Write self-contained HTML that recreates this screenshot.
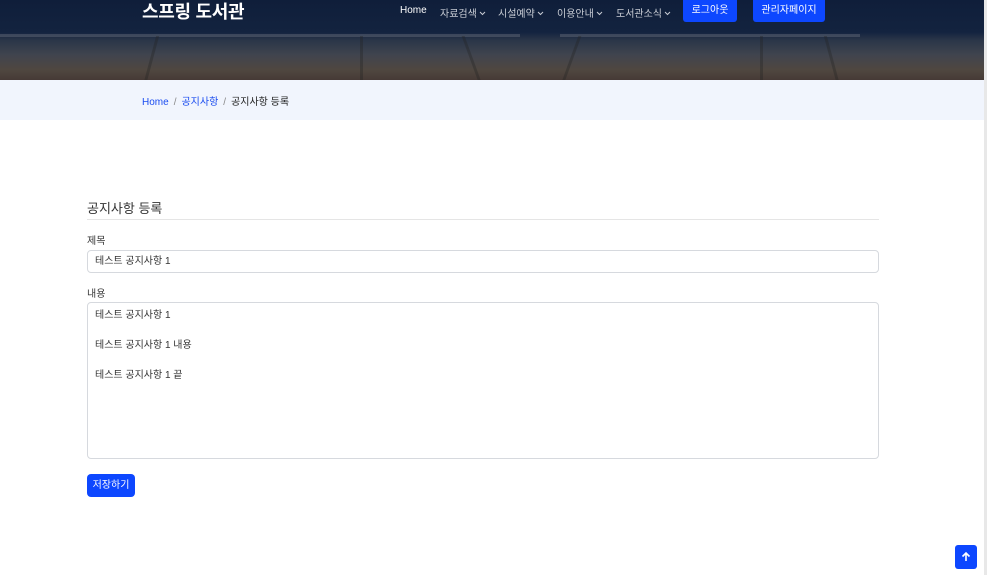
<!DOCTYPE html>
<html><head><meta charset="utf-8"><style>
*{box-sizing:border-box;margin:0;padding:0}
body{width:987px;height:575px;overflow:hidden;background:#fff;font-family:"Liberation Sans","Noto Sans CJK KR",sans-serif;position:relative}
.hero{position:absolute;left:0;top:0;width:984px;height:80px;background:linear-gradient(180deg,#0f1e3a 0px,#13233f 32px,#2a3548 40px,#40444e 55px,#4f4740 70px,#463a36 80px);overflow:hidden}
.hero .leg{position:absolute;top:36px;width:3px;height:46px;background:#222;opacity:.35}
.hero .bar{position:absolute;top:34px;height:3px;background:#8a8f99;opacity:.3}
.brand{position:absolute;left:142px;top:-2px;color:#fff;font-size:18px;font-weight:bold;letter-spacing:-0.3px}
.nav{position:absolute;top:5px;font-size:10px;color:#c8ccd4;white-space:nowrap}
.nav svg{width:7px;height:5px;margin-left:2px;vertical-align:1px}
.btn{position:absolute;top:0;height:22px;background:#0d47ff;color:#fff;font-size:10px;text-align:center;line-height:22px;border-radius:0 0 3px 3px}
.crumb{position:absolute;left:0;top:80px;width:984px;height:40px;background:#f1f5fd;font-size:10px;padding:13px 0 0 142px;color:#222}
.crumb a{color:#1a4cf0;text-decoration:none}
.crumb span{color:#888;margin:0 5px}
.scroll{position:absolute;right:0;top:0;width:3px;height:575px;background:#e8e8e8}
h5{position:absolute;left:87px;top:198px;font-size:13px;font-weight:normal;color:#333}
.hr{position:absolute;left:87px;top:219px;width:792px;height:1px;background:#e5e5e5}
.lbl{position:absolute;left:87px;font-size:10px;color:#333}
.inp{position:absolute;left:87px;width:792px;border:1px solid #d6d9de;border-radius:4px;font-size:10px;color:#333;padding:0 7px}
.save{position:absolute;left:87px;top:474px;width:48px;height:23px;background:#0d47ff;color:#fff;border-radius:4px;font-size:10px;text-align:center;line-height:23px}
.top{position:absolute;left:955px;top:545px;width:22px;height:24px;background:#0d47ff;border-radius:3px}
</style></head><body>
<div class="hero">
<div class="bar" style="left:0;width:520px"></div>
<div class="bar" style="left:560px;width:300px"></div>
<div class="leg" style="left:150px;transform:skewX(-15deg)"></div>
<div class="leg" style="left:360px"></div>
<div class="leg" style="left:470px;transform:skewX(20deg)"></div>
<div class="leg" style="left:570px;transform:skewX(-20deg)"></div>
<div class="leg" style="left:760px"></div>
<div class="leg" style="left:830px;transform:skewX(15deg)"></div>
<div class="brand">스프링 도서관</div>
<div class="nav" style="left:400px;color:#fff">Home</div>
<div class="nav" style="left:440px">자료검색<svg viewBox="0 0 7 5"><path d="M1 1l2.5 2.5L6 1" stroke="#c8ccd4" fill="none"/></svg></div>
<div class="nav" style="left:498px">시설예약<svg viewBox="0 0 7 5"><path d="M1 1l2.5 2.5L6 1" stroke="#c8ccd4" fill="none"/></svg></div>
<div class="nav" style="left:557px">이용안내<svg viewBox="0 0 7 5"><path d="M1 1l2.5 2.5L6 1" stroke="#c8ccd4" fill="none"/></svg></div>
<div class="nav" style="left:616px">도서관소식<svg viewBox="0 0 7 5"><path d="M1 1l2.5 2.5L6 1" stroke="#c8ccd4" fill="none"/></svg></div>
<div class="btn" style="left:683px;width:54px">로그아웃</div>
<div class="btn" style="left:753px;width:72px">관리자페이지</div>
</div>
<div class="crumb"><a>Home</a><span>/</span><a>공지사항</a><span>/</span>공지사항 등록</div>
<h5>공지사항 등록</h5>
<div class="hr"></div>
<div class="lbl" style="top:232px">제목</div>
<div class="inp" style="top:250px;height:23px;line-height:21px">테스트 공지사항 1</div>
<div class="lbl" style="top:285px">내용</div>
<div class="inp" style="top:302px;height:157px;padding-top:5px;line-height:15px">테스트 공지사항 1<br><br>테스트 공지사항 1 내용<br><br>테스트 공지사항 1 끝</div>
<div class="save">저장하기</div>
<div class="top"><svg width="22" height="24" viewBox="0 0 22 24"><path d="M11 16V8M7.5 11.5L11 8l3.5 3.5" stroke="#fff" stroke-width="1.6" fill="none"/></svg></div>
<div class="scroll"></div>
</body></html>
